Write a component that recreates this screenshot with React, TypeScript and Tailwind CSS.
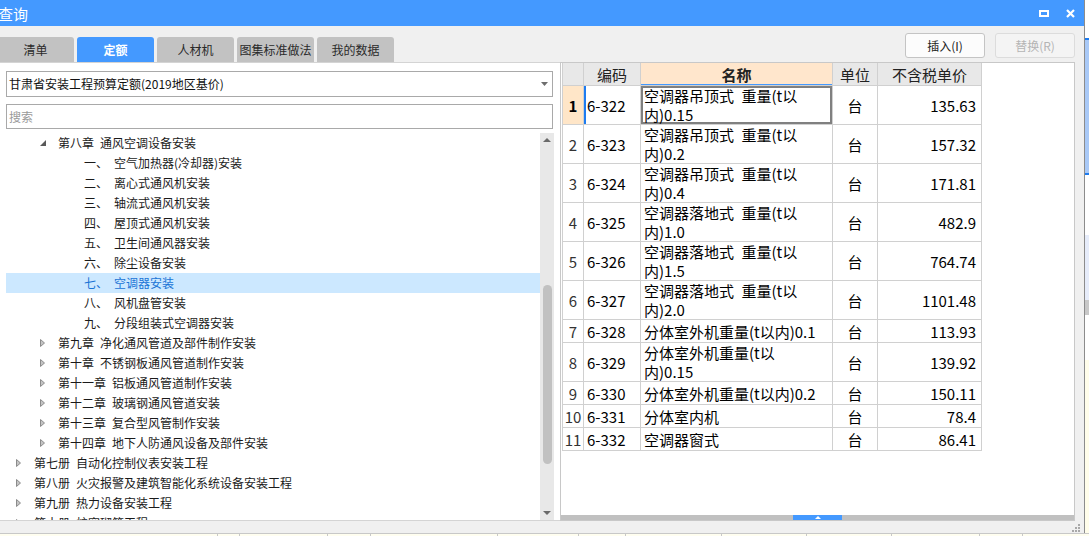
import React from "react";

type TreeItem = {
  level: 1 | 2 | 3;
  arrow?: "open" | "closed";
  num?: string;
  text: string;
  selected?: boolean;
};

const treeItems: TreeItem[] = [
  { level: 2, arrow: "open", num: "第八章", text: "通风空调设备安装" },
  { level: 3, num: "一、", text: "空气加热器(冷却器)安装" },
  { level: 3, num: "二、", text: "离心式通风机安装" },
  { level: 3, num: "三、", text: "轴流式通风机安装" },
  { level: 3, num: "四、", text: "屋顶式通风机安装" },
  { level: 3, num: "五、", text: "卫生间通风器安装" },
  { level: 3, num: "六、", text: "除尘设备安装" },
  { level: 3, num: "七、", text: "空调器安装", selected: true },
  { level: 3, num: "八、", text: "风机盘管安装" },
  { level: 3, num: "九、", text: "分段组装式空调器安装" },
  { level: 2, arrow: "closed", num: "第九章", text: "净化通风管道及部件制作安装" },
  { level: 2, arrow: "closed", num: "第十章", text: "不锈钢板通风管道制作安装" },
  { level: 2, arrow: "closed", num: "第十一章", text: "铝板通风管道制作安装" },
  { level: 2, arrow: "closed", num: "第十二章", text: "玻璃钢通风管道安装" },
  { level: 2, arrow: "closed", num: "第十三章", text: "复合型风管制作安装" },
  { level: 2, arrow: "closed", num: "第十四章", text: "地下人防通风设备及部件安装" },
  { level: 1, arrow: "closed", num: "第七册", text: "自动化控制仪表安装工程" },
  { level: 1, arrow: "closed", num: "第八册", text: "火灾报警及建筑智能化系统设备安装工程" },
  { level: 1, arrow: "closed", num: "第九册", text: "热力设备安装工程" },
  { level: 1, arrow: "closed", num: "第十册", text: "炉窑砌筑工程" },
];

const rows: { no: number; code: string; name: string[]; unit: string; price: string }[] = [
  { no: 1, code: "6-322", name: ["空调器吊顶式\u2002重量(t以", "内)0.15"], unit: "台", price: "135.63" },
  { no: 2, code: "6-323", name: ["空调器吊顶式\u2002重量(t以", "内)0.2"], unit: "台", price: "157.32" },
  { no: 3, code: "6-324", name: ["空调器吊顶式\u2002重量(t以", "内)0.4"], unit: "台", price: "171.81" },
  { no: 4, code: "6-325", name: ["空调器落地式\u2002重量(t以", "内)1.0"], unit: "台", price: "482.9" },
  { no: 5, code: "6-326", name: ["空调器落地式\u2002重量(t以", "内)1.5"], unit: "台", price: "764.74" },
  { no: 6, code: "6-327", name: ["空调器落地式\u2002重量(t以", "内)2.0"], unit: "台", price: "1101.48" },
  { no: 7, code: "6-328", name: ["分体室外机重量(t以内)0.1"], unit: "台", price: "113.93" },
  { no: 8, code: "6-329", name: ["分体室外机重量(t以", "内)0.15"], unit: "台", price: "139.92" },
  { no: 9, code: "6-330", name: ["分体室外机重量(t以内)0.2"], unit: "台", price: "150.11" },
  { no: 10, code: "6-331", name: ["分体室内机"], unit: "台", price: "78.4" },
  { no: 11, code: "6-332", name: ["空调器窗式"], unit: "台", price: "86.41" },
];

const tabs = ["清单", "定额", "人材机", "图集标准做法", "我的数据"];

const levelPad = {
  1: "pl-[10px]",
  2: "pl-[34px]",
  3: "pl-[78px]",
};

const TreeRow = ({ item }: { item: TreeItem }) => (
  <div
    className={`h-[20px] shrink-0 flex items-center whitespace-nowrap ${levelPad[item.level]} ${
      item.selected ? "bg-[#cce8ff] text-[#1b74d6]" : "text-[#1a1a1a]"
    }`}
  >
    {item.arrow && (
      <span className="w-[18px] flex items-center">
        {item.arrow === "open" ? (
          <svg width="6" height="6" viewBox="0 0 6 6">
            <polygon points="6,0 6,6 0,6" fill="#595959" />
          </svg>
        ) : (
          <svg width="5" height="8" viewBox="0 0 5 8">
            <polygon points="0.5,0.5 4.5,4 0.5,7.5" fill="#c4c4c4" stroke="#8c8c8c" strokeWidth="1" />
          </svg>
        )}
      </span>
    )}
    {item.level === 3 ? (
      <>
        <span className="w-[30px]">{item.num}</span>
        <span>{item.text}</span>
      </>
    ) : (
      <span className="flex gap-[6px]">
        <span>{item.num}</span>
        <span>{item.text}</span>
      </span>
    )}
  </div>
);

const App = () => {
  return (
    <div className="w-[1089px] h-[536px] overflow-hidden flex flex-col bg-[#fffef0] font-['Noto_Sans_CJK_SC','Noto_Sans',sans-serif] text-[12px]">
      <div className="h-[533px] flex">
        {/* dialog */}
        <div className="w-[1085px] border-r border-[#8c8c8c] flex flex-col bg-[#f0f0f0]">
          {/* title bar */}
          <div className="h-[26px] bg-[#4499ff] flex items-center justify-between pr-[9px]">
            <span className="text-white text-[15px] leading-none ml-[-2px]">查询</span>
            <div className="flex items-center gap-[17px]">
              <svg width="10" height="7" viewBox="0 0 10 7">
                <rect x="1" y="1" width="8" height="5" fill="none" stroke="#fff" strokeWidth="2" />
              </svg>
              <svg width="9" height="9" viewBox="0 0 9 9">
                <path d="M1 1 L8 8 M8 1 L1 8" stroke="#fff" strokeWidth="2.2" />
              </svg>
            </div>
          </div>

          {/* tabs + buttons */}
          <div className="h-[36px] flex justify-between">
            <div className="flex gap-[3px] ml-[-3px] self-end">
              {tabs.map((t) => (
                <div
                  key={t}
                  className={`w-[77px] h-[25px] rounded-t-[3px] flex items-center justify-center ${
                    t === "定额" ? "bg-[#4499ff] text-white font-bold" : "bg-[#c2c2c2] text-[#2a2a2a]"
                  }`}
                >
                  {t}
                </div>
              ))}
            </div>
            <div className="flex gap-[10px] pt-[7px] pr-[9px]">
              <button className="w-[80px] h-[25px] rounded-[3px] border border-[#c4c4c4] bg-[#fcfcfc] text-[#222]">
                插入(I)
              </button>
              <button className="w-[80px] h-[25px] rounded-[3px] border border-[#dcdcdc] bg-[#f4f4f4] text-[#b4b4b4]">
                替换(R)
              </button>
            </div>
          </div>

          {/* panels */}
          <div className="h-[459px] flex">
            {/* left */}
            <div className="w-[560px] bg-white border-y border-[#d4d4d4] flex flex-col">
              <div className="mt-[8px] ml-[6px] w-[547px] h-[26px] border border-[#a9a9a9] flex items-center justify-between pl-[2px] pr-[4px] text-[#111]">
                <span>甘肃省安装工程预算定额(2019地区基价)</span>
                <svg width="7" height="4" viewBox="0 0 7 4">
                  <polygon points="0,0 7,0 3.5,4" fill="#6e6e6e" />
                </svg>
              </div>
              <div className="mt-[7px] ml-[6px] w-[547px] h-[25px] border border-[#a9a9a9] flex items-center pl-[2px] text-[#9a9a9a]">
                搜索
              </div>
              <div className="mt-[4px] flex-1 flex min-h-0">
                <div className="ml-[6px] w-[534px] flex flex-col overflow-hidden">
                  {treeItems.map((it, i) => (
                    <TreeRow key={i} item={it} />
                  ))}
                </div>
                <div className="w-[14px] bg-[#e8e8e8] flex flex-col items-center">
                  <div className="h-[14px] flex items-center justify-center">
                    <svg width="8" height="4" viewBox="0 0 8 4">
                      <polygon points="0,4 8,4 4,0" fill="#6a6a6a" />
                    </svg>
                  </div>
                  <div className="h-[138px]" />
                  <div className="w-[9px] h-[179px] rounded-full bg-[#c1c1c1]" />
                  <div className="flex-1" />
                  <div className="h-[14px] flex items-center justify-center">
                    <svg width="8" height="4" viewBox="0 0 8 4">
                      <polygon points="0,0 8,0 4,4" fill="#6a6a6a" />
                    </svg>
                  </div>
                </div>
              </div>
            </div>

            {/* right */}
            <div className="w-[515px] border border-[#c8c8c8] bg-white flex flex-col">
              <div className="flex-1 pl-px text-[15px] leading-[19px] text-black">
                <div className="w-[420px] border-l border-[#d0d0d0]">
                  <div className="h-[23px] flex border-b border-[#d0d0d0] bg-[#e8e8e8] text-[#222]">
                    <div className="w-[21px] border-r border-[#d0d0d0]" />
                    <div className="w-[57px] border-r border-[#d0d0d0] flex items-center justify-center">编码</div>
                    <div className="w-[192px] border-r border-[#d0d0d0] flex items-center justify-center bg-[#ffe6cc] font-bold shadow-[inset_0_-1px_0_#4499ff]">
                      名称
                    </div>
                    <div className="w-[45px] border-r border-[#d0d0d0] flex items-center justify-center">单位</div>
                    <div className="w-[104px] border-r border-[#d0d0d0] flex items-center justify-center">不含税单价</div>
                  </div>
                  {rows.map((r) => {
                    const first = r.no === 1;
                    return (
                      <div
                        key={r.no}
                        className={`flex border-b border-[#d0d0d0] ${r.name.length > 1 ? "h-[39px]" : "h-[23px]"}`}
                      >
                        <div
                          className={`w-[21px] border-r border-[#d0d0d0] flex items-center justify-center ${
                            first ? "bg-[#ffe6c8] font-bold" : "text-[#333]"
                          }`}
                        >
                          {r.no}
                        </div>
                        <div
                          className={`w-[57px] border-r border-[#d0d0d0] flex items-center pl-[3px] ${
                            first ? "shadow-[inset_2px_0_0_#1e7cf0]" : ""
                          }`}
                        >
                          {r.code}
                        </div>
                        <div
                          className={`w-[192px] border-r border-[#d0d0d0] flex flex-col justify-center pl-[3px] whitespace-pre ${
                            first ? "shadow-[inset_0_0_0_2px_#808080]" : ""
                          }`}
                        >
                          {r.name.map((l, i) => (
                            <span key={i}>{l}</span>
                          ))}
                        </div>
                        <div className="w-[45px] border-r border-[#d0d0d0] flex items-center justify-center">
                          {r.unit}
                        </div>
                        <div className="w-[104px] border-r border-[#d0d0d0] flex items-center justify-end pr-[5px]">
                          {r.price}
                        </div>
                      </div>
                    );
                  })}
                </div>
              </div>
              <div className="h-[5px] bg-[#c0c0c0] flex">
                <div className="ml-[232px] w-[49px] bg-[#4499ff] flex items-center justify-center">
                  <svg width="6" height="3" viewBox="0 0 6 3">
                    <polygon points="0,3 6,3 3,0" fill="#fff" />
                  </svg>
                </div>
              </div>
            </div>
          </div>

          {/* bottom strip */}
          <div className="flex-1 flex justify-end items-end pr-[4px] pb-[1px]">
            <svg width="8" height="8" viewBox="0 0 8 8">
              <rect x="6" y="0" width="2" height="2" fill="#a8a8a8" />
              <rect x="3" y="3" width="2" height="2" fill="#a8a8a8" />
              <rect x="6" y="3" width="2" height="2" fill="#a8a8a8" />
              <rect x="0" y="6" width="2" height="2" fill="#a8a8a8" />
              <rect x="3" y="6" width="2" height="2" fill="#a8a8a8" />
              <rect x="6" y="6" width="2" height="2" fill="#a8a8a8" />
            </svg>
          </div>
        </div>

        {/* background window strip */}
        <div className="flex-1 flex flex-col bg-white">
          <div className="h-[38px]" />
          <div className="h-[137px] bg-[#a9c9f7] border-y-2 border-[#1e7cf0]" />
          <div className="h-[60px]" />
          <div className="h-[65px] bg-[#e6ecfa]" />
          <div className="h-[15px] bg-[#c8c8c8]" />
          <div className="h-[45px]" />
          <div className="flex-1 bg-[#fffdea]" />
        </div>
      </div>

      {/* background below dialog */}
      <div className="flex-1 flex border-t border-[#c8c8c8]">
        <div className="w-[218px] border-r border-[#c8c8c8]" />
        <div className="w-[22px] border-r border-[#c8c8c8]" />
        <div className="w-[88px] border-r border-[#c8c8c8]" />
        <div className="w-[43px] border-r border-[#c8c8c8]" />
        <div className="w-[127px] border-r border-[#c8c8c8]" />
        <div className="w-[81px] border-r border-[#c8c8c8]" />
        <div className="w-[47px] border-r border-[#c8c8c8]" />
        <div className="w-[96px] border-r border-[#c8c8c8]" />
        <div className="w-[85px] border-r border-[#c8c8c8]" />
        <div className="w-[85px] border-r border-[#c8c8c8]" />
        <div className="w-[88px] border-r border-[#c8c8c8]" />
        <div className="w-[43px] border-r border-[#c8c8c8]" />
      </div>
    </div>
  );
};

export default App;
